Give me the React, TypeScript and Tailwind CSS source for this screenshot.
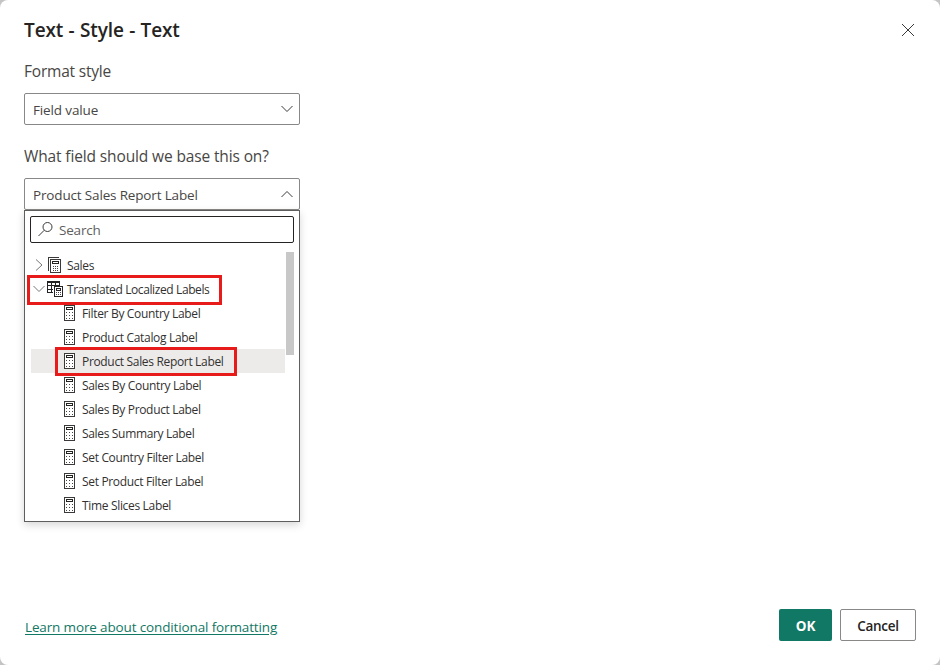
const ink = "#252423";
const dot = "#484644";

function Calculator() {
  return (
    <svg width="12" height="16" viewBox="0 0 12 16" fill="none" shapeRendering="crispEdges" className="shrink-0">
      <rect x="0.5" y="0.5" width="10" height="15" stroke="#3b3a39" fill="white" />
      <rect x="2.5" y="2.5" width="6" height="2" stroke={ink} />
      {[7, 10, 13].map((y) =>
        [2, 5, 8].map((x) => <rect key={`${x}-${y}`} x={x} y={y} width="1" height="1" fill={dot} />)
      )}
    </svg>
  );
}

function MeasureGroup() {
  return (
    <svg width="16" height="16" viewBox="0 0 16 16" fill="none" shapeRendering="crispEdges" className="shrink-0">
      <path d="M0.5 13.5V0.5H11" stroke="#3b3a39" />
      <rect x="2.5" y="2.5" width="10" height="13" stroke="#3b3a39" />
      <rect x="4.5" y="4.5" width="6" height="2" stroke={ink} />
      {[9, 11, 13].map((y) =>
        [5, 7, 9].map((x) => <rect key={`${x}-${y}`} x={x} y={y} width="1" height="1" fill={dot} />)
      )}
    </svg>
  );
}

function TableGroup() {
  return (
    <svg width="16" height="16" viewBox="0 0 16 16" fill="none" shapeRendering="crispEdges" className="shrink-0">
      <path d="M6 11.5H0.5V0.5H12.5V4M0 1.5H13M0 4.5H13M0 8.5H6M4.5 1V12M8.5 1V5" stroke={ink} />
      <rect x="7.5" y="5.5" width="8" height="10" stroke={ink} fill="white" />
      <rect x="9.5" y="7.5" width="4" height="2" stroke={ink} />
      {[11, 13].map((y) =>
        [9, 11, 13].map((x) => <rect key={`${x}-${y}`} x={x} y={y} width="1" height="1" fill={dot} />)
      )}
    </svg>
  );
}

function Chevron({ d, className, color = "#3b3a39" }: { d: string; className?: string; color?: string }) {
  return (
    <svg width="12" height="12" viewBox="0 0 12 12" fill="none" stroke={color} className={className}>
      <path d={d} />
    </svg>
  );
}

const down = "M0.5 3L6 8.5L11.5 3";
const up = "M0.5 9L6 3.5L11.5 9";
const right = "M3 0.5L9 6L3 11.5";

const selected = "Product Sales Report Label";

const fields = [
  "Filter By Country Label",
  "Product Catalog Label",
  "Product Sales Report Label",
  "Sales By Country Label",
  "Sales By Product Label",
  "Sales Summary Label",
  "Set Country Filter Label",
  "Set Product Filter Label",
  "Time Slices Label",
];

export default function App() {
  return (
    <div className="h-[665px] w-[940px] bg-[#c4c4c4]">
      <div className="flex h-full flex-col rounded-lg bg-white px-6 font-['Open_Sans',sans-serif] text-[#252423]">
        <header className="flex h-[59px] items-start justify-between">
          <h1 className="mt-[16px] text-[19px] leading-7 font-semibold tracking-[-0.1px] [word-spacing:0.5px] whitespace-nowrap">Text - Style - Text</h1>
          <svg width="14" height="14" viewBox="0 0 14 14" stroke="#3b3a39" className="mt-[23px] mr-[1px]">
            <path d="M1 1L13 13M13 1L1 13" />
          </svg>
        </header>
        <section className="flex flex-1 flex-col items-start">
          <label className="h-[34px] text-[15.5px] leading-6 tracking-[-0.2px] text-[#484644]">Format style</label>
          <button className="flex h-8 w-[276px] items-center justify-between rounded-[2px] border border-[#8a8886] pr-[6px] pl-2 text-[13.5px] tracking-[-0.13px] text-[#484644]">
            <span className="pt-[3px]">Field value</span>
            <Chevron d={down} />
          </button>
          <label className="mt-[19px] h-[34px] text-[15.5px] leading-6 tracking-[-0.13px] text-[#484644]">What field should we base this on?</label>
          <div className="relative">
            <button className="flex h-8 w-[276px] items-center justify-between rounded-[2px] border border-[#8a8886] pr-[6px] pl-2 text-[13.5px] tracking-[-0.16px] text-[#484644]">
              <span className="pt-[3px]">{selected}</span>
              <Chevron d={up} />
            </button>
            <div className="absolute top-8 left-0 h-[312px] w-[276px] border border-[#605e5c] bg-white px-[5px] pt-[5px] shadow-[0_3px_8px_rgba(0,0,0,0.16)]">
              <div className="flex h-[27px] items-center gap-[6px] rounded-[2px] border border-[#252423] pl-[7px] text-[13.5px] tracking-[-0.2px] text-[#605e5c]">
                <svg width="15" height="15" viewBox="0 0 15 15" fill="none" stroke="#3b3a39">
                  <circle cx="9.5" cy="5" r="4.5" />
                  <path d="M6.3 8.2L0.5 14" />
                </svg>
                <span className="pt-[2px]">Search</span>
              </div>
              <div className="mt-[9px] flex justify-between">
                <ul className="ml-[1px] w-[254px] pt-[1px] text-[12px] leading-6 tracking-[-0.33px] whitespace-nowrap text-[#323130]">
                  <li className="flex h-6 items-center pl-[2px]">
                    <Chevron d={right} color="#797775" className="mr-[3px]" />
                    <MeasureGroup />
                    <span className="ml-[3px] pt-[2px]">Sales</span>
                  </li>
                  <li className="relative flex h-6 items-center pl-[2px]">
                    <Chevron d={down} color="#797775" className="mr-[2px]" />
                    <TableGroup />
                    <span className="ml-[4px] pt-[2px] tracking-[-0.39px]">Translated Localized Labels</span>
                    <i className="absolute top-[-2px] left-[-4px] h-[30px] w-[195px] border-3 border-[#e81b1b]" />
                  </li>
                  {fields.map((name) => (
                    <li key={name} className={`relative flex h-6 items-center gap-[6px] pl-[33px] ${name === selected ? "bg-[#edebe9]" : ""}`}>
                      <Calculator />
                      <span className="pt-[2px]">{name}</span>
                      {name === selected && (
                        <i className="absolute top-[-2px] left-[24px] h-[29px] w-[182px] border-3 border-[#e81b1b]" />
                      )}
                    </li>
                  ))}
                </ul>
                <div className="h-[103px] w-2 bg-[#c8c8c8]" />
              </div>
            </div>
          </div>
        </section>
        <footer className="flex h-14 items-start justify-between">
          <a className="mt-[8px] ml-[1px] text-[13.5px] leading-5 tracking-[-0.14px] text-[#117865] underline underline-offset-2">Learn more about conditional formatting</a>
          <div className="flex gap-2 text-[13.5px] font-semibold tracking-[-0.2px]">
            <button className="h-8 w-[53px] rounded-[2px] bg-[#117865] pt-[2px] font-bold text-white">OK</button>
            <button className="h-8 w-[76px] rounded-[2px] border border-[#8a8886] pt-[2px] tracking-[-0.3px]">Cancel</button>
          </div>
        </footer>
      </div>
    </div>
  );
}
